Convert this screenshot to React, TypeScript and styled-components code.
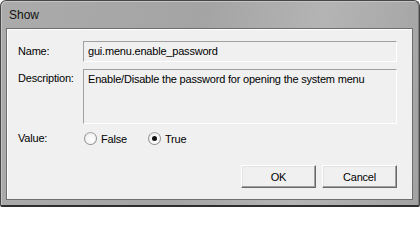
import React from "react";
import styled, { createGlobalStyle } from "styled-components";

const GlobalStyle = createGlobalStyle`
  html, body {
    margin: 0;
    padding: 0;
    background: #ffffff;
  }
  body {
    font-family: "Liberation Sans", Arial, sans-serif;
  }
`;

const Window = styled.div`
  box-sizing: border-box;
  width: 420px;
  height: 207px;
  display: flex;
  flex-direction: column;
  border: 1px solid #474747;
  border-bottom: 2px solid #2e2e2e;
  border-radius: 6px 6px 2px 2px;
  background: linear-gradient(100deg, #ababab 0%, #a4a4a4 45%, #b4b4b4 72%, #a2a2a2 100%);
  box-shadow: inset 1px 1px 0 #c4c4c4, inset -1px 0 0 #7d7d7d;
  padding: 0 6px 5px 5px;
`;

const TitleBar = styled.div`
  height: 27px;
  display: flex;
  align-items: center;
  padding-left: 3px;
  font-size: 12px;
  color: #111;
`;

const Client = styled.div`
  box-sizing: border-box;
  flex: 1;
  background: #f0f0f0;
  border: 1px solid #6e6e6e;
  box-shadow: inset 1px 1px 0 #ffffff;
  display: flex;
  flex-direction: column;
  padding: 12px 15px 11px 11px;
  font-size: 11px;
  letter-spacing: -0.2px;
  color: #000;
`;

const Form = styled.div`
  display: grid;
  grid-template-columns: 65px 1fr;
  row-gap: 7px;
  align-items: center;
`;

const Label = styled.div<{ $top?: boolean }>`
  align-self: ${(p) => (p.$top ? "start" : "center")};
  padding-top: ${(p) => (p.$top ? "3px" : "0")};
  line-height: 13px;
`;

const Field = styled.div<{ $height: number }>`
  box-sizing: border-box;
  height: ${(p) => p.$height}px;
  border: 1px solid #ffffff;
  border-top-color: #a0a0a0;
  border-left-color: #a0a0a0;
  background: #f0f0f0;
  padding: 3px 4px;
  line-height: 13px;
  white-space: nowrap;
  overflow: hidden;
`;

const RadioGroup = styled.div`
  display: flex;
  align-items: center;
  gap: 21px;
  margin: 1px 0 0 1px;
  height: 13px;
`;

const RadioOption = styled.label`
  display: flex;
  align-items: center;
  gap: 4px;
`;

const RadioCircle = styled.span<{ $checked?: boolean }>`
  box-sizing: border-box;
  width: 13px;
  height: 13px;
  border-radius: 50%;
  border: 1px solid #8f8f8f;
  border-top-color: #a8a8a8;
  background: radial-gradient(circle at 60% 60%, #ffffff 0%, #f4f4f4 55%, #dcdcdc 100%);
  display: flex;
  align-items: center;
  justify-content: center;

  &::after {
    content: "";
    width: 5px;
    height: 5px;
    border-radius: 50%;
    background: ${(p) => (p.$checked ? "#111" : "transparent")};
  }
`;

const Footer = styled.div`
  margin-top: auto;
  display: flex;
  justify-content: flex-end;
  gap: 6px;
`;

const Button = styled.button`
  box-sizing: border-box;
  width: 75px;
  height: 23px;
  padding: 0;
  font-family: inherit;
  font-size: 11px;
  letter-spacing: -0.2px;
  color: #000;
  background: #f0f0f0;
  border: 1px solid;
  border-color: #ffffff #696969 #696969 #ffffff;
  box-shadow: inset -1px -1px 0 #a0a0a0, inset 1px 1px 0 #e3e3e3;
`;

export default function App() {
  return (
    <>
      <GlobalStyle />
      <Window>
        <TitleBar>Show</TitleBar>
        <Client>
          <Form>
            <Label>Name:</Label>
            <Field $height={21}>gui.menu.enable_password</Field>
            <Label $top>Description:</Label>
            <Field $height={55}>
              Enable/Disable the password for opening the system menu
            </Field>
            <Label>Value:</Label>
            <RadioGroup>
              <RadioOption>
                <RadioCircle />
                False
              </RadioOption>
              <RadioOption>
                <RadioCircle $checked />
                True
              </RadioOption>
            </RadioGroup>
          </Form>
          <Footer>
            <Button>OK</Button>
            <Button>Cancel</Button>
          </Footer>
        </Client>
      </Window>
    </>
  );
}
